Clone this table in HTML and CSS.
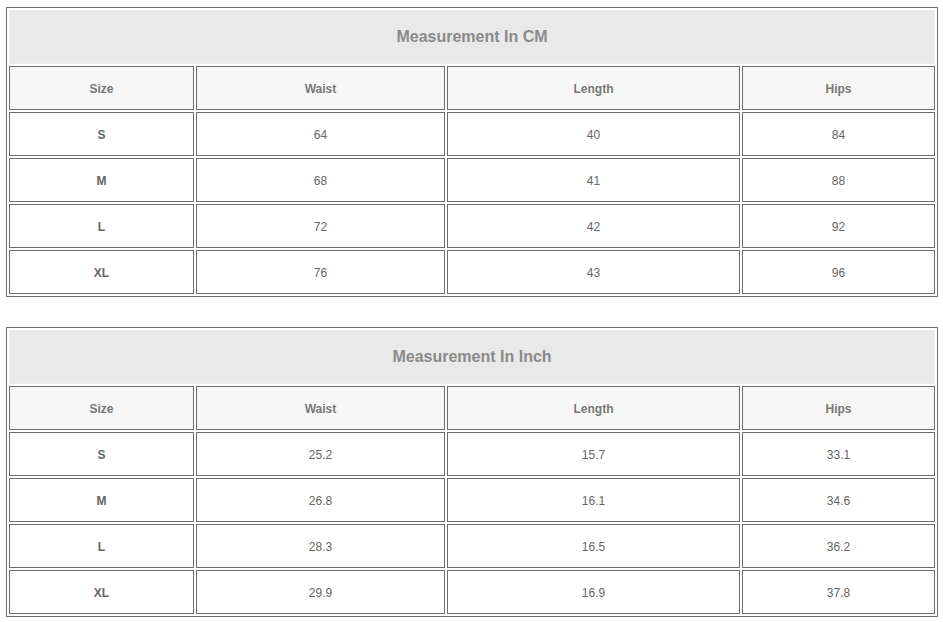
FILE: index.html
```html
<!DOCTYPE html>
<html>
<head>
<meta charset="utf-8">
<link rel="stylesheet" href="styles.css">
</head>
<body>
<div class="page">
<table class="size-table">
  <colgroup><col class="c1"><col class="c2"><col class="c3"><col class="c4"></colgroup>
  <tr><td class="title" colspan="4">Measurement In CM</td></tr>
  <tr class="head"><td>Size</td><td>Waist</td><td>Length</td><td>Hips</td></tr>
  <tr><td class="sz">S</td><td>64</td><td>40</td><td>84</td></tr>
  <tr><td class="sz">M</td><td>68</td><td>41</td><td>88</td></tr>
  <tr><td class="sz">L</td><td>72</td><td>42</td><td>92</td></tr>
  <tr><td class="sz">XL</td><td>76</td><td>43</td><td>96</td></tr>
</table>
<table class="size-table">
  <colgroup><col class="c1"><col class="c2"><col class="c3"><col class="c4"></colgroup>
  <tr><td class="title" colspan="4">Measurement In Inch</td></tr>
  <tr class="head"><td>Size</td><td>Waist</td><td>Length</td><td>Hips</td></tr>
  <tr><td class="sz">S</td><td>25.2</td><td>15.7</td><td>33.1</td></tr>
  <tr><td class="sz">M</td><td>26.8</td><td>16.1</td><td>34.6</td></tr>
  <tr><td class="sz">L</td><td>28.3</td><td>16.5</td><td>36.2</td></tr>
  <tr><td class="sz">XL</td><td>29.9</td><td>16.9</td><td>37.8</td></tr>
</table>
</div>
</body>
</html>
```
FILE: styles.css
```css
html, body {
  margin: 0;
  padding: 0;
  background: #ffffff;
}
.page {
  padding: 7px 6px 0 6px;
  display: flex;
  flex-direction: column;
  gap: 30px;
  font-family: "Liberation Sans", Arial, sans-serif;
}
.size-table {
  width: 932px;
  table-layout: fixed;
  border-collapse: separate;
  border-spacing: 2px;
  border: 1px solid #6e6e6e;
  color: #666666;
  font-size: 12px;
}
.c1 { width: 185px; }
.c2 { width: 249px; }
.c3 { width: 293px; }
.c4 { width: 193px; }
.size-table td {
  box-sizing: border-box;
  height: 44px;
  padding: 2px 0 0 0;
  border: 1px solid #6e6e6e;
  text-align: center;
  vertical-align: middle;
  background: #ffffff;
}
.size-table td.title {
  height: 54px;
  padding: 0;
  border: 1px solid #ededed;
  background: #e9e9e9;
  color: #8a8a8a;
  font-size: 16px;
  font-weight: bold;
}
.size-table .head td {
  background: #f7f7f7;
  font-weight: bold;
  color: #777777;
}
.size-table td.sz {
  font-weight: bold;
  color: #666666;
}
```
